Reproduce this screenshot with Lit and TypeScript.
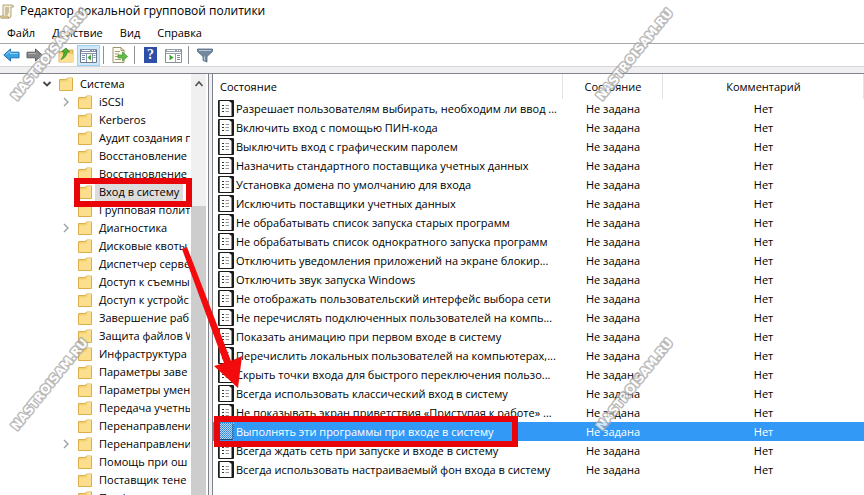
import { LitElement, html, svg, css } from "lit";
import { customElement, property, state } from "lit/decorators.js";
import { classMap } from "lit/directives/class-map.js";

interface TreeNode {
  label: string;
  expander?: "open" | "closed";
  root?: boolean;
}

const TREE: TreeNode[] = [
  { label: "Система", expander: "open", root: true },
  { label: "iSCSI", expander: "closed" },
  { label: "Kerberos" },
  { label: "Аудит создания п" },
  { label: "Восстановление" },
  { label: "Восстановление" },
  { label: "Вход в систему" },
  { label: "Групповая полит" },
  { label: "Диагностика", expander: "closed" },
  { label: "Дисковые квоты" },
  { label: "Диспетчер серве" },
  { label: "Доступ к съемны" },
  { label: "Доступ к устройс" },
  { label: "Завершение раб" },
  { label: "Защита файлов W" },
  { label: "Инфраструктура" },
  { label: "Параметры заве" },
  { label: "Параметры умен" },
  { label: "Передача учетны" },
  { label: "Перенаправлени" },
  { label: "Перенаправлени", expander: "closed" },
  { label: "Помощь при ош" },
  { label: "Поставщик тене" },
  { label: "Профили" },
];

const POLICIES = [
  "Разрешает пользователям выбирать, необходим ли ввод ...",
  "Включить вход с помощью ПИН-кода",
  "Выключить вход с графическим паролем",
  "Назначить стандартного поставщика учетных данных",
  "Установка домена по умолчанию для входа",
  "Исключить поставщики учетных данных",
  "Не обрабатывать список запуска старых программ",
  "Не обрабатывать список однократного запуска программ",
  "Отключить уведомления приложений на экране блокир...",
  "Отключить звук запуска Windows",
  "Не отображать пользовательский интерфейс выбора сети",
  "Не перечислять подключенных пользователей на компь...",
  "Показать анимацию при первом входе в систему",
  "Перечислить локальных пользователей на компьютерах,...",
  "Скрыть точки входа для быстрого переключения пользо...",
  "Всегда использовать классический вход в систему",
  "Не показывать экран приветствия «Приступая к работе» ...",
  "Выполнять эти программы при входе в систему",
  "Всегда ждать сеть при запуске и входе в систему",
  "Всегда использовать настраиваемый фон входа в систему",
];

const icon = (w: number, h: number, body: unknown) =>
  html`<svg width=${w} height=${h} viewBox="0 0 ${w} ${h}" aria-hidden="true">${body}</svg>`;

const scrollIcon = icon(14, 16, svg`
  <path d="M3 2H12Q13.500 2 13.500 4H11V13Q11 15 9 15H1Q3 14 3 12Z" fill="#f7efd2" stroke="#a08f60" stroke-width=".8"/>
  <path d="M0 13H8Q8 15 9 15H1Q0 14.500 0 13Z" fill="#e3d49c" stroke="#a08f60" stroke-width=".6"/>
  <path d="M5 5H9M5 7H9M5 9H9M5 11H8" stroke="#8b8876" stroke-width=".9"/>`);

const folder = icon(14, 14, svg`
  <path d="M.5 2.500H7L8.500 1H13.500V13.500H.5Z" fill="#f3cf6e" stroke="#d9ae4b" stroke-width="1"/>
  <path d="M1 4.500H8L9.500 3H13V13H1Z" fill="#fbdf8c"/>
  <path d="M9 2H13" stroke="#fff4cf"/>`);

const policyIcon = icon(16, 17, svg`
  <path d="M.5 .5H15.500V16.500H.5Z" fill="#fff" stroke="#1a1a1a"/>
  <path d="M1.500 1V16" stroke="#555"/>
  <path d="M14.500 3V16" stroke="#1a1a1a" stroke-width="2"/>
  <path d="M11 1L15 4V1Z" fill="#1a1a1a"/>
  <path d="M4 5.500H6M4 8.500H6M4 11.500H6" stroke="#333"/>
  <path d="M7.500 5.500H11M7.500 8.500H11M7.500 11.500H11" stroke="#999"/>`);

const policyIconSelected = icon(16, 17, svg`
  <defs><pattern id="dots" width="2" height="2" patternUnits="userSpaceOnUse">
    <rect width="2" height="2" fill="#b4d8fa"/><rect width="1" height="1" fill="#2f7fcf"/><rect x="1" y="1" width="1" height="1" fill="#4c9be8"/>
  </pattern></defs>
  <rect width="16" height="17" fill="url(#dots)"/>
  <path d="M.5 16.500V.5M15 1V16.500H1" fill="none" stroke="#174b80"/>`);

const backIcon = icon(17, 14, svg`
  <path d="M.8 7L7.500 1V4.200H16V9.800H7.500V13Z" fill="#3aa3e6" stroke="#1f6fae" stroke-width="1"/>
  <path d="M3 6.500L7 3V5.500H15" fill="none" stroke="#8fd0f6"/>`);
const forwardIcon = icon(17, 14, svg`
  <path d="M16.200 7L9.500 1V4.200H1V9.800H9.500V13Z" fill="#858585" stroke="#5e5e5e" stroke-width="1"/>
  <path d="M2 5.500H10" stroke="#b5b5b5"/>`);
const upIcon = icon(16, 16, svg`
  <path d="M1 4.500H7L8.500 3H15V15H1Z" fill="#f0cb68" stroke="#cfa244" stroke-width=".8"/>
  <path d="M1.500 7H15V15H1.500Z" fill="#fbe091"/>
  <path d="M3 12.500Q9 10 9 5H11.500L8 1L3.500 4.500L6 5Q6 9 3 12.500Z" fill="#4caf35" stroke="#2f8520" stroke-width=".7"/>`);
const treeIcon = icon(17, 15, svg`
  <path d="M.5 1.500H16.500V14.500H.5Z" fill="#fff" stroke="#6d7785"/>
  <path d="M1 1H16V4H1Z" fill="#8592a5"/>
  <path d="M2 2.500H10M12 2.500H13M14 2.500H15" stroke="#fff"/>
  <path d="M6.500 5V14M12.500 5V14M1 5.500H16" stroke="#8c96a3"/>
  <path d="M2 7.500H5M2 9.500H5M2 11.500H5M13.500 7.500H15.500M13.500 9.500H15.500" stroke="#6f8fbc"/>
  <path d="M11 6.500V12.500L7.500 9.500Z" fill="#3fa535"/>`);
const exportIcon = icon(16, 16, svg`
  <path d="M1 .5H9L12 3.500V15.500H1Z" fill="#fffdf0" stroke="#9d9570"/>
  <path d="M9 .5V3.500H12" fill="none" stroke="#9d9570"/>
  <path d="M3 4.500H8M3 7H7M3 9.500H7M3 12.500H9" stroke="#a59b80"/>
  <path d="M6 8H10.500V5L15.500 9.500L10.500 14V11H6Z" fill="#62bd45" stroke="#3f9330" stroke-width=".7"/>`);
const propsIcon = icon(17, 15, svg`
  <path d="M.5 1.500H16.500V14.500H.5Z" fill="#fff" stroke="#8a8f96"/>
  <path d="M1 1H16V4H1Z" fill="#9aa1ac"/>
  <path d="M2 2.500H10M12 2.500H13M14 2.500H15" stroke="#fff"/>
  <path d="M10.500 5V14M1 5.500H16" stroke="#9aa1ac"/>
  <path d="M12 7.500H15M12 9.500H15M12 11.500H15" stroke="#7f8fa8"/>
  <path d="M4.500 6.500V12.500L8.500 9.500Z" fill="#3fa535"/>`);
const filterIcon = icon(16, 15, svg`
  <path d="M.5 1H15.500V3.500L10 8.500V14L6 12.500V8.500L.5 3.500Z" fill="#71889f" stroke="#53687d" stroke-width=".8"/>
  <path d="M2 2.500H14" stroke="#b9c8d6"/>
  <path d="M7.500 8.500V12.500" stroke="#b9c8d6" stroke-width="1.200"/>`);
const chevronDown = icon(10, 10, svg`<path d="M1.500 3L5 6.500L8.500 3" fill="none" stroke="#444" stroke-width="1.800"/>`);
const chevronRight = icon(10, 10, svg`<path d="M3 1L7 5L3 9" fill="none" stroke="#a0a0a0" stroke-width="1.400"/>`);
const chevronUp = icon(10, 10, svg`<path d="M1.500 7L5 3L8.500 7" fill="none" stroke="#505050" stroke-width="1.600"/>`);

@customElement("policy-tree")
class PolicyTree extends LitElement {
  @property() selected = "";

  static styles = css`
    :host { display: flex; min-height: 0; overflow: hidden; background: #fff; border-right: 1px solid #7f8288; }
    button { font: inherit; color: inherit; border: 0; padding: 0; background: none; }
    .items { flex: 1; min-width: 0; margin: 0; padding: 1px 1px 0 38px; list-style: none; overflow: hidden; }
    .row { display: grid; grid-template-columns: 18px 14px 1fr; align-items: center; gap: 0 3px; height: 18px; padding-left: 19px; white-space: nowrap; overflow: hidden; }
    .row.root { padding-left: 0; }
    .toggle { display: flex; justify-content: center; width: 18px; }
    .name { justify-self: start; height: 18px; line-height: 18px; padding: 0 4px; }
    .selected .name { background: #dcdcdc; }
    svg { display: block; }
    .scroll { flex: none; width: 15px; margin-right: 2px; background: #f0f0f0; display: flex; flex-direction: column; }
    .up { display: flex; justify-content: center; padding: 5px 0; }
    .thumb { flex: 1; margin-top: 112px; background: #cdcdcd; }
  `;

  render() {
    return html`
      <ul class="items">
        ${TREE.map((n) => html`
          <li class=${classMap({ row: true, root: !!n.root, selected: n.label === this.selected })}>
            ${n.expander
              ? html`<button class="toggle" aria-label="Развернуть">${n.expander === "open" ? chevronDown : chevronRight}</button>`
              : html`<span></span>`}
            ${folder}
            <button class="name" @click=${() => this.pick(n.label)}>${n.label}</button>
          </li>`)}
      </ul>
      <div class="scroll">
        <button class="up" aria-label="Вверх">${chevronUp}</button>
        <div class="thumb"></div>
      </div>`;
  }

  private pick(label: string) {
    this.dispatchEvent(new CustomEvent("pick", { detail: label }));
  }
}

@customElement("policy-list")
class PolicyList extends LitElement {
  @property({ type: Number }) selected = -1;

  static styles = css`
    :host { display: block; min-height: 0; overflow: hidden; background: #fff; border-left: 1px solid #7f8288; }
    table { width: 100%; border-collapse: collapse; table-layout: fixed; }
    .status { width: 100px; }
    .comment { width: 201px; }
    th, td { padding: 0; font-weight: 400; white-space: nowrap; overflow: hidden; text-align: center; line-height: 18px; }
    th { height: 25px; background: linear-gradient(#e3e3e3, #e3e3e3) right / 1px 100% no-repeat; vertical-align: middle; }
    th:first-child { text-align: left; padding-left: 7px; }
    td { height: 19px; }
    td:first-child { text-align: left; }
    .name { display: flex; align-items: center; gap: 2px; padding-left: 5px; height: 19px; }
    .name svg { flex: none; }
    .selected td { background: #3399f7; color: #fff; }
  `;

  render() {
    return html`
      <table>
        <colgroup><col /><col class="status" /><col class="comment" /></colgroup>
        <thead><tr><th>Состояние</th><th>Состояние</th><th>Комментарий</th></tr></thead>
        <tbody>
          ${POLICIES.map((p, i) => html`
            <tr class=${classMap({ selected: i === this.selected })}>
              <td><div class="name">${i === this.selected ? policyIconSelected : policyIcon}<span>${p}</span></div></td>
              <td>Не задана</td>
              <td>Нет</td>
            </tr>`)}
        </tbody>
      </table>`;
  }
}

@customElement("app-root")
class AppRoot extends LitElement {
  @state() private folderName = "Вход в систему";

  static styles = css`
    :host { position: relative; display: flex; flex-direction: column; height: 100vh; overflow: hidden; background: #fff;
      color: #000; font: 11px/18px "Open Sans", "Noto Sans", sans-serif; }
    button { font: inherit; color: inherit; border: 0; padding: 0; background: none; }
    svg { display: block; }
    .title { display: flex; align-items: center; gap: 6px; height: 22px; }
    h1 { margin: 0; font-size: 12px; font-weight: 400; }
    .menu { display: flex; gap: 17px; height: 21px; padding-left: 7px; border-bottom: 1px solid #a8a8a8; }
    .tools { display: flex; align-items: center; height: 22px; border-bottom: 1px solid #d5d5d5; }
    .tool { display: flex; align-items: center; justify-content: center; width: 23px; height: 21px; }
    .on { background: #cce8fa; outline: 1px solid #9fd0f2; outline-offset: -1px; }
    .sep { width: 1px; height: 18px; background: #8d9095; margin: 0 4px 0 3px; }
    .help { display: flex; align-items: center; justify-content: center; width: 13px; height: 16px; background: #2d4fa8; color: #fff; font: 700 14px/16px "Liberation Serif", serif; }
    .panes { flex: 1; min-height: 0; display: grid; grid-template-columns: 209px 1fr; gap: 3px; margin-top: 6px; border-top: 1px solid #7f8288; }
    .gutter { background: #f0f0f2; flex: 1; display: flex; flex-direction: column; min-height: 0; }
    .overlay { position: absolute; inset: 0; width: 864px; height: 495px; pointer-events: none; }
    .mark { font: 700 12px "DejaVu Sans", sans-serif; fill: #fff; stroke: #a4a4a4; stroke-width: 3px; stroke-linejoin: round; paint-order: stroke; opacity: .75; }
  `;

  render() {
    return html`
      <header class="title">${scrollIcon}<h1>Редактор локальной групповой политики</h1></header>
      <nav class="menu">
        ${["Файл", "Действие", "Вид", "Справка"].map((m) => html`<button>${m}</button>`)}
      </nav>
      <div class="tools" role="toolbar">
        <button class="tool" aria-label="Назад">${backIcon}</button>
        <button class="tool" aria-label="Вперед">${forwardIcon}</button>
        <span class="sep"></span>
        <button class="tool" aria-label="На уровень вверх">${upIcon}</button>
        <button class="tool on" aria-label="Дерево консоли">${treeIcon}</button>
        <span class="sep"></span>
        <button class="tool" aria-label="Экспортировать список">${exportIcon}</button>
        <span class="sep"></span>
        <button class="tool" aria-label="Справка"><span class="help">?</span></button>
        <button class="tool" aria-label="Область действий">${propsIcon}</button>
        <span class="sep"></span>
        <button class="tool" aria-label="Фильтр">${filterIcon}</button>
      </div>
      <div class="gutter">
        <main class="panes">
          <policy-tree .selected=${this.folderName} @pick=${(e: CustomEvent) => (this.folderName = e.detail)}></policy-tree>
          <policy-list .selected=${17}></policy-list>
        </main>
      </div>
      <svg class="overlay" viewBox="0 0 864 495" aria-hidden="true">
        ${[[17, 101], [602, 101], [17, 431], [602, 431]].map(([x, y]) => svg`
          <text class="mark" transform="translate(${x} ${y}) rotate(-51)">NASTROISAM.RU</text>`)}
        <rect x="77" y="181" width="112" height="23" fill="none" stroke="#e9040a" stroke-width="6"/>
        <rect x="217" y="419" width="298" height="25" fill="none" stroke="#e9040a" stroke-width="6"/>
        <path d="M182 249L187 247L231 361L242 356L238 388L214 366L224 363Z" fill="#f20a0c"/>
      </svg>`;
  }
}
